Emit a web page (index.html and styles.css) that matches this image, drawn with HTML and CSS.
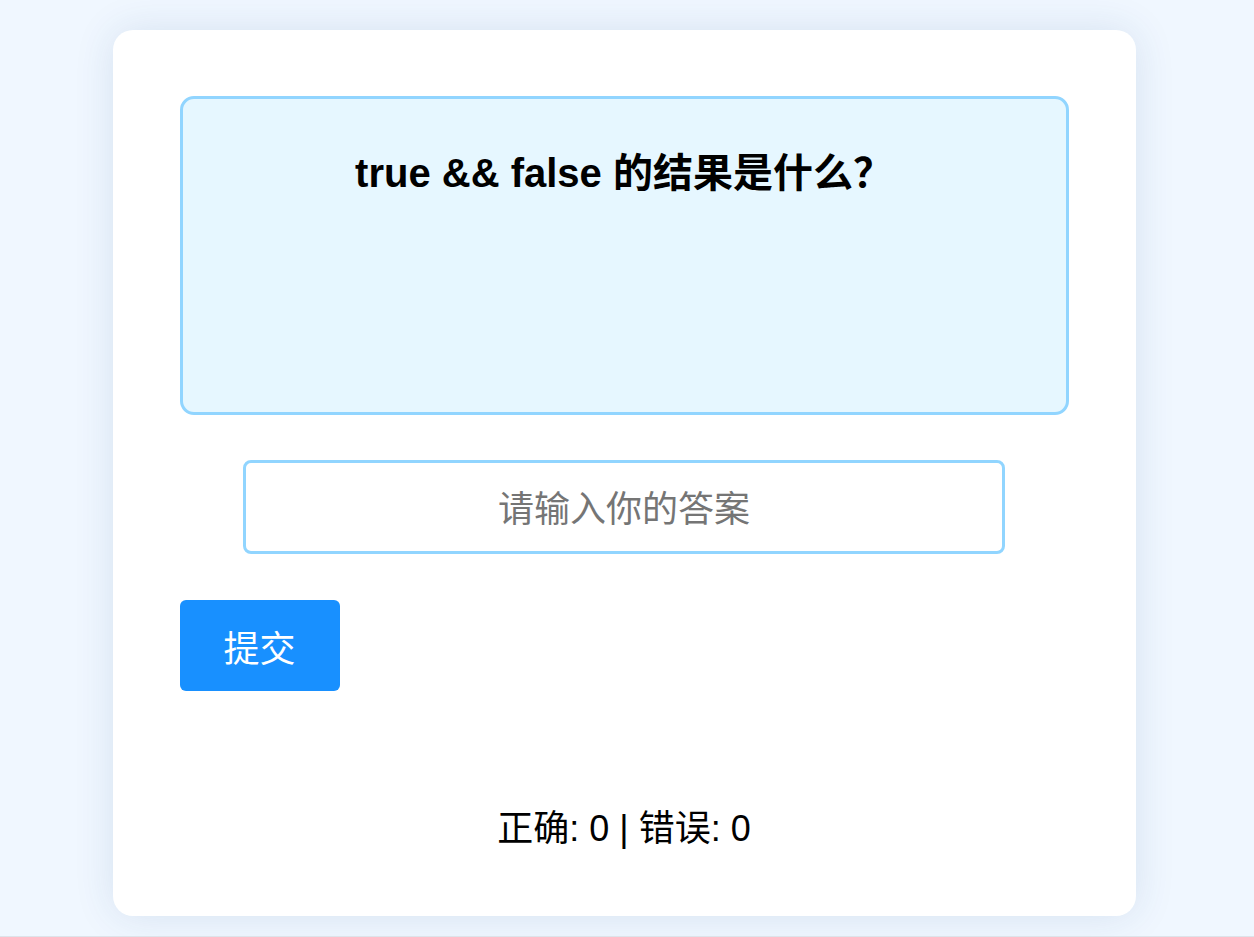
FILE: index.html
```html
<!DOCTYPE html>
<html lang="zh-CN">
<head>
<meta charset="UTF-8" />
<meta name="viewport" content="width=device-width, initial-scale=1" />
<title>逻辑运算小测验</title>
<link rel="stylesheet" href="styles.css">
</head>
<body>

<div class="quiz-card">
  <div class="question-box">
    <h2 id="question">true &amp;&amp; false 的结果是什么？</h2>
  </div>

  <input type="text" id="answer" class="answer-input" placeholder="请输入你的答案" />

  <button class="submit-btn" onclick="checkAnswer()">提交</button>

  <p class="score" id="score">正确: 0 | 错误: 0</p>
</div>

<script>
  let right = 0;
  let wrong = 0;

  function checkAnswer() {
    const input = document.getElementById('answer');
    if (input.value.trim() === 'false') {
      right++;
    } else {
      wrong++;
    }
    input.value = '';
    document.getElementById('score').textContent = `正确: ${right} | 错误: ${wrong}`;
  }
</script>

</body>
</html>
```

FILE: styles.css
```css
body {
  margin: 0; padding: 30px 6px 0 0; min-height: 937px; box-sizing: border-box;
  background: #f0f7ff; border-bottom: 1px solid #dde3ea;
  font-family: "Liberation Sans", Arial, "Noto Sans CJK SC", sans-serif;
}
.quiz-card {
  width: 1023px; box-sizing: border-box; margin: 0 auto; padding: 66px 67px 0;
  height: 886px; background: #fff; border-radius: 20px;
  box-shadow: 0 0 40px rgba(30, 70, 130, 0.12);
}
.question-box {
  height: 319px; box-sizing: border-box; padding-top: 50px;
  background: #e6f7ff; border: 3px solid #91d5ff; border-radius: 14px; text-align: center;
}
.question-box h2 { margin: 0; font-size: 40px; line-height: 1.2; font-weight: bold; color: #000; }
.answer-input {
  display: block; width: 762px; height: 94px; box-sizing: border-box; margin: 45px auto 0;
  border: 3px solid #91d5ff; border-radius: 8px; font-size: 36px; text-align: center;
  font-family: inherit; outline: none; padding-top: 6px;
}
.answer-input::placeholder { color: #757575; }
.submit-btn {
  display: block; margin-top: 46px; width: 160px; height: 91px;
  background: #1890ff; color: #fff; border: none; border-radius: 6px;
  font-size: 36px; font-family: inherit; cursor: pointer;
}
.submit-btn:hover { background: #40a9ff; }
.score { margin: 108px 0 0; text-align: center; font-size: 36px; color: #000; }
```
